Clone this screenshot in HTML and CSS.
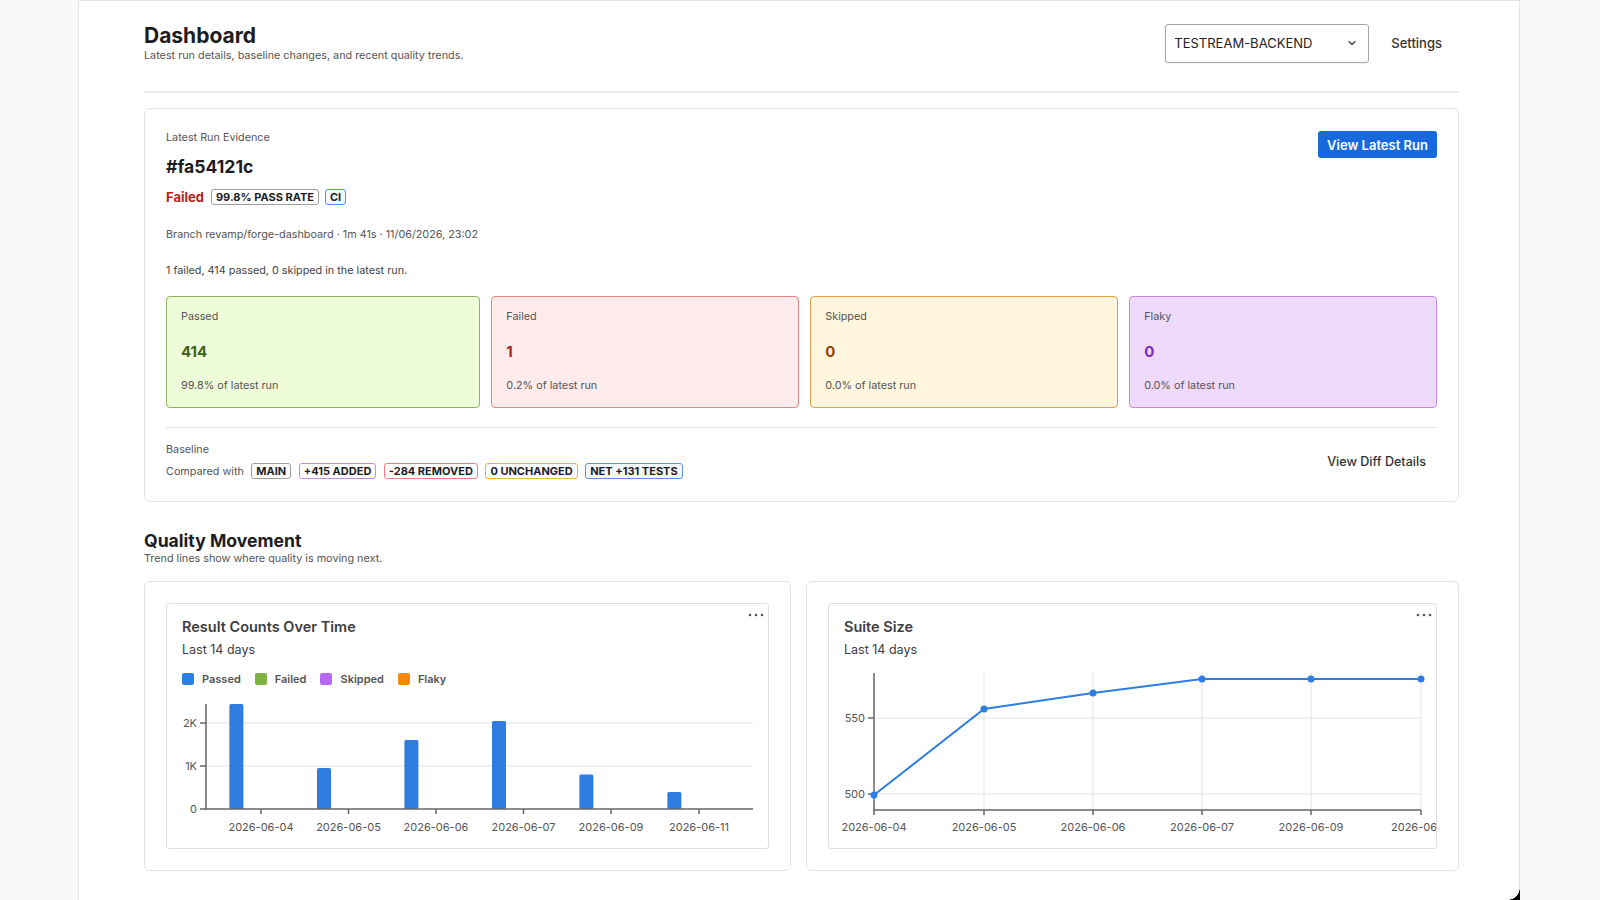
FILE: index.html
```html
<!DOCTYPE html>
<html lang="en">

<head>
    <meta charset="UTF-8">
    <meta name="viewport" content="width=device-width, initial-scale=1.0">
    <title>Dashboard</title>
    <link rel="stylesheet" href="styles.css">
</head>

<body>
    <div class="shell">
        <header class="topbar">
            <div>
                <h1 class="page-title">Dashboard</h1>
                <p class="page-sub">Latest run details, baseline changes, and recent quality trends.</p>
            </div>
            <div class="topbar-actions">
                <div class="project-select">
                    <span>TESTREAM-BACKEND</span>
                    <svg width="12" height="12" viewBox="0 0 12 12"><path d="M3 4.5l3 3 3-3" fill="none" stroke="#444" stroke-width="1.3" stroke-linecap="round" stroke-linejoin="round" /></svg>
                </div>
                <a class="link-btn" href="#">Settings</a>
            </div>
        </header>

        <section class="card run-card">
            <div class="run-head">
                <div>
                    <div class="muted-label">Latest Run Evidence</div>
                    <div class="run-id">#fa54121c</div>
                    <div class="run-status">
                        <span class="status-failed">Failed</span>
                        <span class="badge">99.8% PASS RATE</span>
                        <span class="badge badge-blue">CI</span>
                    </div>
                </div>
                <button class="primary-btn">View Latest Run</button>
            </div>
            <p class="run-meta">Branch revamp/forge-dashboard · 1m 41s · 11/06/2026, 23:02</p>
            <p class="run-summary">1 failed, 414 passed, 0 skipped in the latest run.</p>

            <div class="stats">
                <div class="stat stat-passed">
                    <div class="stat-label">Passed</div>
                    <div class="stat-value">414</div>
                    <div class="stat-sub">99.8% of latest run</div>
                </div>
                <div class="stat stat-failed">
                    <div class="stat-label">Failed</div>
                    <div class="stat-value">1</div>
                    <div class="stat-sub">0.2% of latest run</div>
                </div>
                <div class="stat stat-skipped">
                    <div class="stat-label">Skipped</div>
                    <div class="stat-value">0</div>
                    <div class="stat-sub">0.0% of latest run</div>
                </div>
                <div class="stat stat-flaky">
                    <div class="stat-label">Flaky</div>
                    <div class="stat-value">0</div>
                    <div class="stat-sub">0.0% of latest run</div>
                </div>
            </div>

            <div class="baseline">
                <div>
                    <div class="muted-label">Baseline</div>
                    <div class="baseline-row">
                        <span class="compared">Compared with</span>
                        <span class="badge">MAIN</span>
                        <span class="badge badge-purple">+415 ADDED</span>
                        <span class="badge badge-red">-284 REMOVED</span>
                        <span class="badge badge-amber">0 UNCHANGED</span>
                        <span class="badge badge-blue">NET +131 TESTS</span>
                    </div>
                </div>
                <a class="link-btn diff-link" href="#">View Diff Details</a>
            </div>
        </section>

        <h2 class="section-title">Quality Movement</h2>
        <p class="section-sub">Trend lines show where quality is moving next.</p>

        <div class="charts">
            <div class="card chart-card">
                <div class="chart-box">
                    <svg class="chart-menu" width="16" height="4" viewBox="0 0 16 4"><circle cx="2" cy="2" r="1.3" /><circle cx="8" cy="2" r="1.3" /><circle cx="14" cy="2" r="1.3" /></svg>
                    <div class="chart-title">Result Counts Over Time</div>
                    <div class="chart-sub">Last 14 days</div>
                    <div class="legend">
                        <span class="legend-item"><i class="swatch sw-passed"></i>Passed</span>
                        <span class="legend-item"><i class="swatch sw-failed"></i>Failed</span>
                        <span class="legend-item"><i class="swatch sw-skipped"></i>Skipped</span>
                        <span class="legend-item"><i class="swatch sw-flaky"></i>Flaky</span>
                    </div>
                    <svg class="plot bar-plot" width="600" height="148" viewBox="0 0 600 148">
                        <g class="grid">
                            <line x1="39" y1="30" x2="586" y2="30" />
                            <line x1="39" y1="73" x2="586" y2="73" />
                        </g>
                        <g class="bars">
                            <rect x="62.4" y="11" width="14" height="105" rx="1.5" />
                            <rect x="150" y="75" width="14" height="41" rx="1.5" />
                            <rect x="237.4" y="47" width="14" height="69" rx="1.5" />
                            <rect x="325" y="28" width="14" height="88" rx="1.5" />
                            <rect x="412.4" y="81.5" width="14" height="34.5" rx="1.5" />
                            <rect x="500.4" y="99" width="14" height="17" rx="1.5" />
                        </g>
                        <g class="axis">
                            <line x1="39" y1="11" x2="39" y2="116.5" />
                            <line x1="38.5" y1="116" x2="586" y2="116" />
                            <line x1="33" y1="30" x2="39" y2="30" />
                            <line x1="33" y1="73" x2="39" y2="73" />
                            <line x1="33" y1="116" x2="39" y2="116" />
                            <line x1="94" y1="116" x2="94" y2="121" />
                            <line x1="181.5" y1="116" x2="181.5" y2="121" />
                            <line x1="269" y1="116" x2="269" y2="121" />
                            <line x1="356.5" y1="116" x2="356.5" y2="121" />
                            <line x1="444" y1="116" x2="444" y2="121" />
                            <line x1="532" y1="116" x2="532" y2="121" />
                        </g>
                        <g class="tick-y">
                            <text x="30" y="34">2K</text>
                            <text x="30" y="77">1K</text>
                            <text x="30" y="120">0</text>
                        </g>
                        <g class="tick-x">
                            <text x="94" y="138">2026-06-04</text>
                            <text x="181.5" y="138">2026-06-05</text>
                            <text x="269" y="138">2026-06-06</text>
                            <text x="356.5" y="138">2026-06-07</text>
                            <text x="444" y="138">2026-06-09</text>
                            <text x="532" y="138">2026-06-11</text>
                        </g>
                    </svg>
                </div>
            </div>

            <div class="card chart-card">
                <div class="chart-box">
                    <svg class="chart-menu" width="16" height="4" viewBox="0 0 16 4"><circle cx="2" cy="2" r="1.3" /><circle cx="8" cy="2" r="1.3" /><circle cx="14" cy="2" r="1.3" /></svg>
                    <div class="chart-title">Suite Size</div>
                    <div class="chart-sub">Last 14 days</div>
                    <svg class="plot line-plot" width="607" height="180" viewBox="0 0 607 180">
                        <g class="grid">
                            <line x1="155" y1="12" x2="155" y2="149" />
                            <line x1="264" y1="12" x2="264" y2="149" />
                            <line x1="373" y1="12" x2="373" y2="149" />
                            <line x1="482" y1="12" x2="482" y2="149" />
                            <line x1="592" y1="12" x2="592" y2="149" />
                            <line x1="45" y1="57" x2="592" y2="57" />
                            <line x1="45" y1="133" x2="592" y2="133" />
                        </g>
                        <g class="axis">
                            <line x1="45" y1="12" x2="45" y2="149.5" />
                            <line x1="44.5" y1="149" x2="592" y2="149" />
                            <line x1="39" y1="57" x2="45" y2="57" />
                            <line x1="39" y1="133" x2="45" y2="133" />
                            <line x1="45" y1="149" x2="45" y2="154" />
                            <line x1="155" y1="149" x2="155" y2="154" />
                            <line x1="264" y1="149" x2="264" y2="154" />
                            <line x1="373" y1="149" x2="373" y2="154" />
                            <line x1="482" y1="149" x2="482" y2="154" />
                            <line x1="592" y1="149" x2="592" y2="154" />
                        </g>
                        <polyline class="trend" points="45,134 155,48 264,32 373,18 482,18 592,18" />
                        <g class="dots">
                            <circle cx="45" cy="134" r="3.5" />
                            <circle cx="155" cy="48" r="3.5" />
                            <circle cx="264" cy="32" r="3.5" />
                            <circle cx="373" cy="18" r="3.5" />
                            <circle cx="482" cy="18" r="3.5" />
                            <circle cx="592" cy="18" r="3.5" />
                        </g>
                        <g class="tick-y">
                            <text x="36" y="61">550</text>
                            <text x="36" y="137">500</text>
                        </g>
                        <g class="tick-x">
                            <text x="45" y="170">2026-06-04</text>
                            <text x="155" y="170">2026-06-05</text>
                            <text x="264" y="170">2026-06-06</text>
                            <text x="373" y="170">2026-06-07</text>
                            <text x="482" y="170">2026-06-09</text>
                            <text x="592" y="170">2026-06-11</text>
                        </g>
                    </svg>
                </div>
            </div>
        </div>
    </div>
    <div class="screen-corner"></div>
</body>

</html>
```

FILE: styles.css
```css
* {
    margin: 0;
    padding: 0;
    box-sizing: border-box;
}

body {
    width: 1600px;
    height: 900px;
    overflow: hidden;
    background-color: #f8f9fb;
    font-family: Inter, "Liberation Sans", sans-serif;
    color: #222;
}

a {
    color: #333;
    text-decoration: none;
}

.shell {
    width: 1442px;
    height: 900px;
    margin-left: 78px;
    padding: 0 60px 0 65px;
    background-color: #fff;
    border: 1px solid #e3e4e6;
    border-bottom: none;
}

/* header */

.topbar {
    display: flex;
    justify-content: space-between;
    align-items: center;
    padding: 22px 0 28px;
    border-bottom: 2px solid #ebebeb;
}

.page-title {
    font-size: 21px;
    line-height: 26px;
    font-weight: 700;
    color: #1d1d1f;
}

.page-sub {
    font-size: 10.8px;
    line-height: 14px;
    color: #555;
}

.topbar-actions {
    display: flex;
    align-items: center;
    gap: 22px;
    margin-right: 17px;
}

.project-select {
    width: 204px;
    height: 39px;
    display: flex;
    align-items: center;
    justify-content: space-between;
    padding: 0 10px 0 8px;
    border: 1px solid #a5a5a5;
    border-radius: 3px;
    font-size: 13px;
    color: #222;
    box-shadow: 0 1px 1px rgba(0, 0, 0, 0.05);
}

.link-btn {
    font-size: 13px;
    font-weight: 500;
    color: #333;
}

/* run card */

.card {
    border: 1px solid #e3e3e3;
    border-radius: 6px;
    background-color: #fff;
}

.run-card {
    margin-top: 15px;
    padding: 21px 21px 21px;
}

.run-head {
    display: flex;
    justify-content: space-between;
    align-items: flex-start;
}

.muted-label {
    font-size: 10.8px;
    line-height: 16px;
    color: #555;
}

.run-id {
    margin-top: 9px;
    font-size: 17.6px;
    line-height: 24px;
    font-weight: 700;
    color: #1d1d1f;
}

.run-status {
    margin-top: 9px;
    height: 18px;
    display: flex;
    align-items: center;
    gap: 6px;
}

.status-failed {
    font-size: 13px;
    font-weight: 700;
    color: #b42318;
    margin-right: 1px;
}

.badge {
    display: inline-block;
    height: 16px;
    line-height: 14px;
    padding: 0 4px;
    border: 1px solid #9e9e9e;
    border-radius: 3px;
    font-size: 11px;
    font-weight: 700;
    color: #1d1d1f;
}

.badge-blue {
    border-color: #5a92ea;
    background-color: #f3f7ff;
}

.badge-purple {
    border-color: #c38af2;
}

.badge-red {
    border-color: #ee7c7c;
}

.badge-amber {
    border-color: #efb43f;
}

.primary-btn {
    margin-top: 1px;
    width: 119px;
    height: 27px;
    border: none;
    border-radius: 3px;
    background-color: #1769dd;
    color: #fff;
    font-family: inherit;
    font-size: 13px;
    font-weight: 600;
    cursor: pointer;
}

.run-meta {
    margin-top: 21px;
    font-size: 10.8px;
    line-height: 16px;
    color: #555;
}

.run-summary {
    margin-top: 20px;
    font-size: 10.8px;
    line-height: 16px;
    color: #444;
}

.stats {
    margin-top: 17px;
    display: flex;
    gap: 11px;
}

.stat {
    flex: 1 1 auto;
    height: 112px;
    padding: 12px 14px;
    border: 1px solid;
    border-radius: 4px;
}

.stat-label {
    font-size: 10.8px;
    line-height: 16px;
    color: #555;
}

.stat-value {
    margin-top: 17px;
    font-size: 15px;
    line-height: 20px;
    font-weight: 700;
}

.stat-sub {
    margin-top: 16px;
    font-size: 10.8px;
    line-height: 16px;
    color: #555;
}

.stat-passed {
    background-color: #eefcd9;
    border-color: #8fb35f;
}

.stat-passed .stat-value {
    color: #3f6212;
}

.stat-failed {
    background-color: #ffebeb;
    border-color: #e58585;
}

.stat-failed .stat-value {
    color: #b91c1c;
}

.stat-skipped {
    background-color: #fff6dd;
    border-color: #e5a145;
}

.stat-skipped .stat-value {
    color: #8f4607;
}

.stat-flaky {
    background-color: #efdafc;
    border-color: #c58ae9;
}

.stat-flaky .stat-value {
    color: #7b2bbd;
}

.baseline {
    margin-top: 19px;
    padding-top: 14px;
    border-top: 1px solid #e3e3e3;
    display: flex;
    justify-content: space-between;
    align-items: center;
}

.baseline-row {
    margin-top: 4px;
    height: 18px;
    display: flex;
    align-items: center;
    gap: 7.5px;
}

.compared {
    font-size: 10.8px;
    color: #555;
}

.diff-link {
    font-size: 12.6px;
    padding-right: 11px;
}

/* quality movement */

.section-title {
    margin-top: 28px;
    font-size: 17.6px;
    line-height: 22px;
    font-weight: 700;
    color: #1d1d1f;
}

.section-sub {
    font-size: 10.8px;
    line-height: 14px;
    color: #555;
}

.charts {
    margin-top: 15px;
    display: grid;
    grid-template-columns: 647fr 653fr;
    gap: 15px;
}

.chart-card {
    height: 290px;
    padding: 21px;
}

.chart-box {
    position: relative;
    height: 246px;
    border: 1px solid #dedede;
    border-radius: 3px;
    overflow: hidden;
}

.chart-menu {
    position: absolute;
    top: 9px;
    right: 4px;
    fill: #555;
}

.chart-title {
    margin: 13px 0 0 15px;
    font-size: 14.5px;
    line-height: 20px;
    font-weight: 600;
    color: #3d3d42;
}

.chart-sub {
    margin: 4px 0 0 15px;
    font-size: 12.5px;
    line-height: 18px;
    color: #3d3d42;
}

.legend {
    margin: 12px 0 0 15px;
    height: 16px;
    display: flex;
    align-items: center;
    gap: 14px;
}

.legend-item {
    display: flex;
    align-items: center;
    gap: 8px;
    font-size: 11px;
    font-weight: 600;
    color: #555;
}

.swatch {
    width: 12px;
    height: 12px;
    border-radius: 2px;
}

.sw-passed {
    background-color: #2f7de1;
}

.sw-failed {
    background-color: #7cb342;
}

.sw-skipped {
    background-color: #b867f0;
}

.sw-flaky {
    background-color: #f58a12;
}

.plot {
    display: block;
}

.bar-plot {
    margin-top: 6px;
}

.line-plot {
    margin-top: 2px;
}

.plot .grid line {
    stroke: #e3e3e3;
    stroke-width: 1;
}

.plot .axis line {
    stroke: #666;
    stroke-width: 1.5;
}

.plot .bars rect {
    fill: #2f7de1;
}

.plot .trend {
    fill: none;
    stroke: #2f7de1;
    stroke-width: 2;
}

.plot .dots circle {
    fill: #2f7de1;
}

.plot text {
    font-family: Inter, "Liberation Sans", sans-serif;
    font-size: 11px;
    fill: #555;
}

.tick-y text {
    text-anchor: end;
}

.tick-x text {
    text-anchor: middle;
}

.screen-corner {
    position: absolute;
    left: 1508px;
    top: 888px;
    width: 12px;
    height: 12px;
    background: radial-gradient(circle at 0 0, transparent 11.5px, #000 12px);
}
```
